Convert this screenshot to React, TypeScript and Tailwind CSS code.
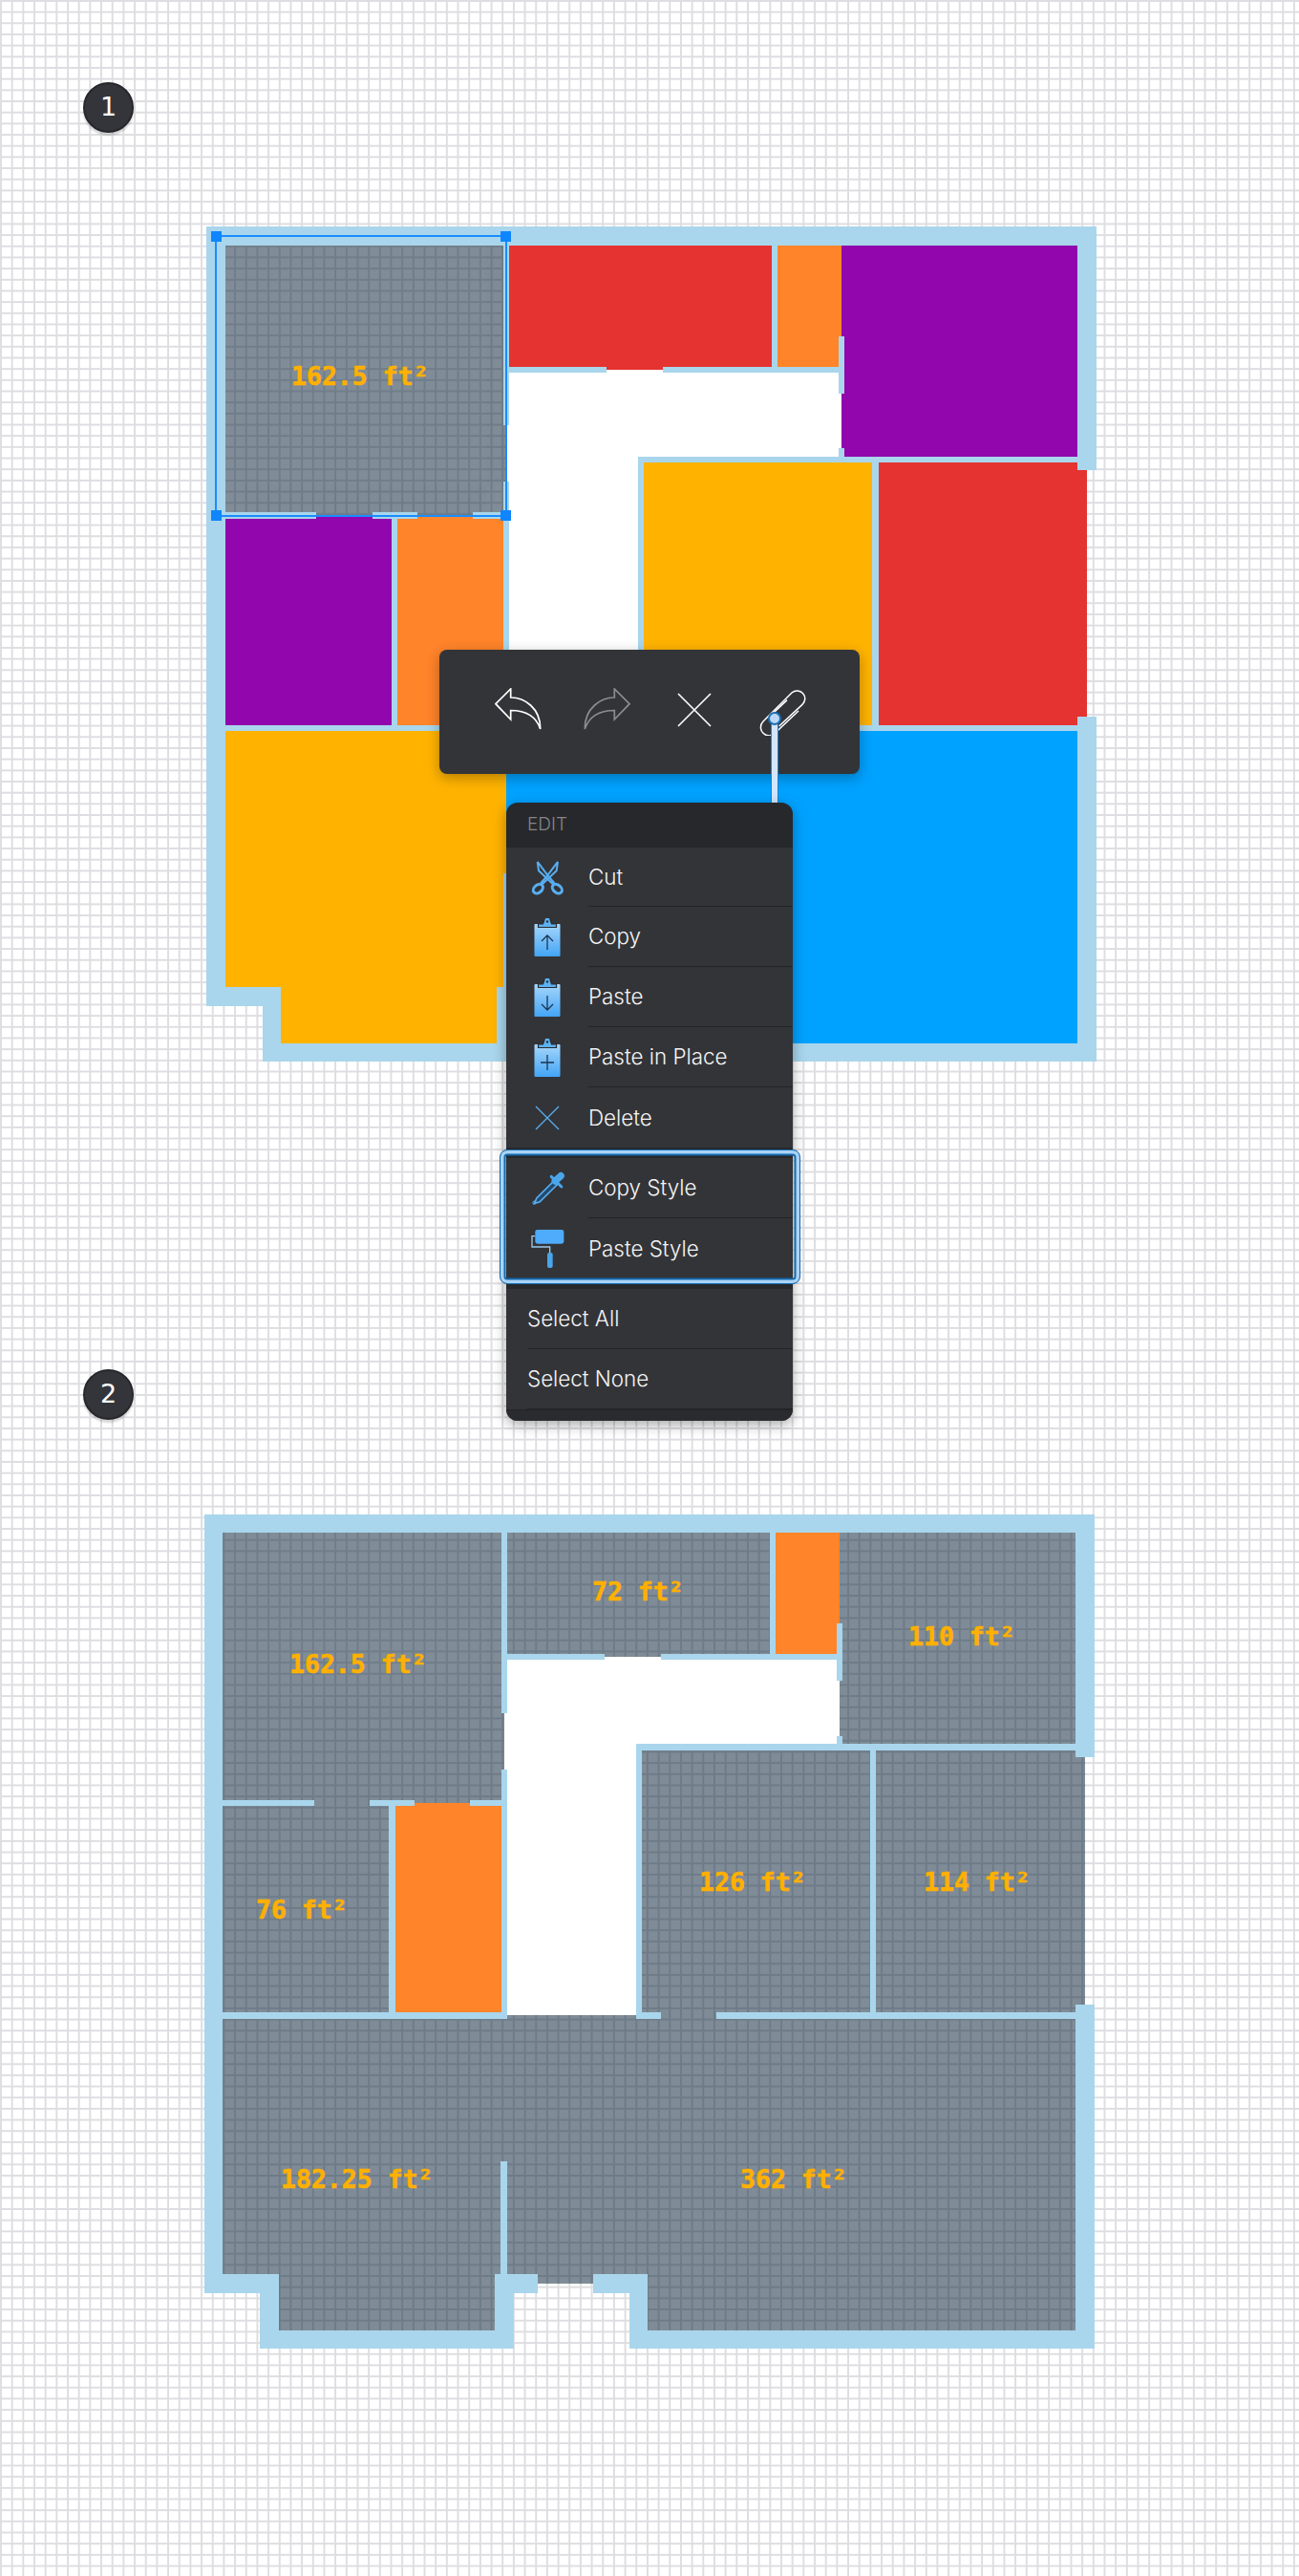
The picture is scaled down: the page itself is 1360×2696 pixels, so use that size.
import { useId } from 'react';
import type { ReactNode } from 'react';

type Box = [number, number, number, number];

const WALL = '#a9d6ec';
const GREY = '#011b31';
const ORANGE = '#ff842a';
const RED = '#e43330';
const PURPLE = '#9106ad';
const YELLOW = '#ffb300';
const BLUE = '#00a2ff';

// all rectangles are in the coordinates of the second plan
const rooms: Record<string, Box[]> = {
  a: [[233.4, 1604, 524.7, 1883.7], [524, 1792.7, 527.7, 1851.7], [328.7, 1883, 387.3, 1886.7], [434.3, 1883, 492.3, 1886.7]],
  b: [[530.7, 1604, 805.6, 1731.3], [633, 1731, 691.7, 1734]],
  c: [[811.8, 1604, 878.6, 1731.3]],
  d: [[878.6, 1604, 1126.2, 1825]],
  e: [[671.7, 1831.7, 911, 2106], [691.7, 2105, 750.2, 2109.3]],
  f: [[917.2, 1831.7, 1136.2, 2106]],
  g: [[233.4, 1890, 407.3, 2106], [328.7, 1886.7, 387.3, 1891]],
  h: [[414, 1890, 524.7, 2106], [434.3, 1886.7, 492.3, 1891]],
  i: [[233.4, 2112, 527.7, 2380], [291.6, 2379, 517.5, 2439]],
  j: [[527.7, 2112, 1126.2, 2381], [530.6, 2109.3, 665.5, 2113], [691.7, 2109.3, 750.2, 2113], [562.6, 2380, 620.8, 2390.3], [678, 2380, 1126.2, 2439]],
};

const corridor: Box[] = [
  [530.7, 1737.3, 878.6, 1825],
  [530.7, 1825, 665.5, 2109.3],
  [633, 1734, 691.7, 1738],
  [527.7, 1792.7, 531, 1851.7],
];

const walls: Box[] = [
  [214, 1584.7, 1145.5, 1604],
  [214, 1584.7, 233.4, 2400],
  [214, 2380, 291.6, 2400],
  [272.3, 2380, 291.6, 2458],
  [272.3, 2439, 537.5, 2458],
  [517.5, 2380, 537.5, 2458],
  [517.5, 2380, 562.6, 2400],
  [620.8, 2380, 678, 2400],
  [659, 2380, 678, 2458],
  [659, 2439, 1145.5, 2458],
  [1126.2, 2097.7, 1145.5, 2458],
  [1126.2, 1584.7, 1145.5, 1839.3],
  [524.7, 1604, 530.7, 1792.7],
  [524.7, 1851.7, 530.7, 2112.7],
  [524.7, 1731.3, 633, 1737.3],
  [691.7, 1731.3, 878.6, 1737.3],
  [805.6, 1604, 811.8, 1731.3],
  [875.5, 1699.3, 882, 1759],
  [875.5, 1816.7, 882, 1825],
  [665.5, 1825, 1126.2, 1831.7],
  [665.5, 1825, 671.7, 2112.7],
  [665.5, 2106, 691.7, 2112.7],
  [750.2, 2106, 1126.2, 2112.7],
  [911, 1831.7, 917.2, 2106],
  [233.4, 1883.7, 328.7, 1890],
  [387.3, 1883.7, 434.3, 1890],
  [492.3, 1883.7, 524.7, 1890],
  [407.3, 1890, 414, 2106],
  [233.4, 2106, 530.7, 2112.7],
  [524.4, 2261.7, 530.6, 2380],
];

const Boxes = ({ list, fill }: { list: Box[]; fill?: string }) => (
  <>
    {list.map(([x1, y1, x2, y2], i) => (
      <rect key={i} x={x1} y={y1} width={x2 - x1} height={y2 - y1} fill={fill} />
    ))}
  </>
);

const Plan = ({ colors, shift }: { colors: Record<string, string>; shift: string }) => {
  const greyRooms = Object.keys(rooms).filter((k) => !colors[k]);
  return (
    <svg width="960" height="900" viewBox="200 1570 960 900" className="block" shapeRendering="crispEdges">
      <g transform={shift}>
        <g opacity="0.5" fill={GREY}>
          {greyRooms.map((k) => (
            <Boxes key={k} list={rooms[k]} />
          ))}
        </g>
        {Object.keys(colors).map((k) => (
          <Boxes key={k} list={rooms[k]} fill={colors[k]} />
        ))}
        <Boxes list={corridor} fill="#ffffff" />
        <Boxes list={walls} fill={WALL} />
      </g>
    </svg>
  );
};

const Label = ({ className, children }: { className: string; children: ReactNode }) => (
  <span className={`absolute -translate-y-1/2 font-['DejaVu_Sans_Mono',monospace] text-[26.5px] leading-none font-bold whitespace-nowrap text-[#ffb000] [-webkit-text-stroke:0.6px_#ffb000] ${className}`}>
    {children}
  </span>
);

const Marker = ({ n }: { n: number }) => (
  <div className="absolute top-[86px] left-[87px] flex h-[53px] w-[53px] items-center justify-center rounded-full border-2 border-[#26272b] bg-[#34353a] font-['DejaVu_Sans',sans-serif] text-[27px] text-white shadow-[0_3px_2px_rgba(0,0,0,0.16)]">
    {n}
  </div>
);

const Handle = ({ className }: { className: string }) => (
  <div className={`absolute h-[11px] w-[11px] bg-[#0f86ff] ${className}`} />
);

const UndoIcon = ({ flip, color }: { flip?: boolean; color: string }) => (
  <svg width="50" height="46" viewBox="-1 -1 50 46" fill="none" stroke={color} strokeWidth="1.7" strokeLinejoin="miter" className={flip ? '-scale-x-100' : ''}>
    <path d="M0 15.7 15.7 0v9C30 9 47 20 46.7 42 42 28 30 22.5 15.7 22.5V32Z" />
  </svg>
);

const CloseIcon = () => (
  <svg width="36" height="36" viewBox="0 0 36 36" stroke="#ffffff" strokeWidth="1.6">
    <path d="M1 1 35 35M35 1 1 35" />
  </svg>
);

const ClipIcon = () => (
  <svg width="50" height="50" viewBox="1060 180 150 150" fill="none" stroke="#ffffff" strokeWidth="4.5" className="mt-[5px]">
    <path d="M1186 252 1112 322A24 24 0 0 1 1075 285L1165 195A24 24 0 0 1 1198 232L1125 300" />
    <path d="M1150 218 1100 265" />
  </svg>
);

const ScissorsIcon = () => (
  <svg width="36" height="37" viewBox="165 203 108 110" fill="none" stroke="#58aef0">
    <path strokeWidth="6" d="M188 208 192 236 238 280M188 208 226 258 242 276M252 208 248 236 202 280M252 208 214 258 198 276" />
    <ellipse cx="190" cy="293" rx="17" ry="12" strokeWidth="9" transform="rotate(-40 190 293)" />
    <ellipse cx="250" cy="293" rx="17" ry="12" strokeWidth="9" transform="rotate(40 250 293)" />
  </svg>
);

const ClipboardIcon = ({ mark }: { mark: string }) => {
  const id = useId();
  return (
    <svg width="28" height="40" viewBox="0 0 28 40">
      <defs>
        <linearGradient id={id} x1="0" y1="0" x2="0" y2="1">
          <stop offset="0" stopColor="#a6d6fb" />
          <stop offset="1" stopColor="#43a5f6" />
        </linearGradient>
      </defs>
      <rect x="0.5" y="6" width="27" height="34" rx="1" fill={`url(#${id})`} />
      <path d="M4.5 9.5V6h5l1.5-4.5a3 3 0 0 1 6 0L18.500 6h5v3.500Z" fill="#5cb2f2" stroke="#2a2b30" strokeWidth="1.2" />
      <circle cx="14" cy="3.500" r="1.200" fill="#2a2b30" />
      <path d={mark} fill="none" stroke="#1c3550" strokeWidth="1.300" />
    </svg>
  );
};

const DeleteIcon = () => (
  <svg width="26" height="26" viewBox="0 0 26 26" stroke="#58aef0" strokeWidth="1.300">
    <path d="M1 1 25 25M25 1 1 25" />
  </svg>
);

const DropperIcon = () => (
  <svg width="37" height="36" viewBox="162 250 110 108" fill="none">
    <path d="M236 280 182 334 175 350 191 346 246 292Z" fill="#214a70" stroke="#58aef0" strokeWidth="5" />
    <path d="M228 266 260 298" stroke="#4aa6ea" strokeWidth="9" strokeLinecap="round" />
    <path d="M240 280 258 264" stroke="#4aa6ea" strokeWidth="22" strokeLinecap="round" />
    <circle cx="175" cy="348" r="5" stroke="#58aef0" strokeWidth="3" />
  </svg>
);

const RollerIcon = () => (
  <svg width="36" height="42" viewBox="162 430 108 126" fill="none">
    <rect x="178" y="433" width="90" height="44" rx="7" fill="#4fabfb" />
    <path d="M178 453H168V487H224V510" stroke="#9cc8ea" strokeWidth="4" />
    <rect x="216" y="505" width="17" height="48" rx="6" fill="#4aa6ea" />
  </svg>
);

const MenuRow = ({ icon, label, last, heightClass }: { icon: ReactNode; label: string; last?: boolean; heightClass: string }) => (
  <div className={`flex items-stretch bg-[#333438] pl-[21px] ${heightClass}`}>
    <div className="flex w-[44px] items-center justify-center">{icon}</div>
    <div className={`ml-[21px] flex flex-1 items-center text-[22.4px] font-light text-[#f4f4f5] ${last ? '' : 'border-b border-[#232427]'}`}>{label}</div>
  </div>
);

const PlainRow = ({ label, last }: { label: string; last?: boolean }) => (
  <div className="h-[63px] bg-[#333438] pl-[22px]">
    <div className={`flex h-full items-center text-[22.4px] font-light text-[#f4f4f5] ${last ? '' : 'border-b border-[#232427]'}`}>{label}</div>
  </div>
);

const Band = () => <div className="h-[11px] bg-[#27282b]" />;

const Menu = () => (
  <div className="absolute top-[840px] left-[530px] w-[300px] rounded-xl bg-[#27282b] font-[Inter,sans-serif] shadow-[0_4px_14px_rgba(0,0,0,0.35)]">
    <div className="flex h-[47px] items-center pl-[22px] text-[19px] font-light text-[#85858a]">EDIT</div>
    <MenuRow heightClass="h-[62px]" icon={<ScissorsIcon />} label="Cut" />
    <MenuRow heightClass="h-[63px]" icon={<ClipboardIcon mark="M14 33V18M8 24 14 18l6 6" />} label="Copy" />
    <MenuRow heightClass="h-[63px]" icon={<ClipboardIcon mark="M14 18V33M8 27 14 33l6-6" />} label="Paste" />
    <MenuRow heightClass="h-[63px]" icon={<ClipboardIcon mark="M14 17V33M7 25H21" />} label="Paste in Place" />
    <MenuRow heightClass="h-[63px]" icon={<DeleteIcon />} label="Delete" last />
    <Band />
    <MenuRow heightClass="h-[63px]" icon={<DropperIcon />} label="Copy Style" />
    <MenuRow heightClass="h-[63px]" icon={<RollerIcon />} label="Paste Style" last />
    <Band />
    <PlainRow label="Select All" />
    <PlainRow label="Select None" />
    <div className="h-[12px] rounded-b-xl border-t border-[#232427] bg-[#2a2b2e]" />
    <div className="absolute top-[363px] -left-[7px] h-[141px] w-[315px] rounded-lg border-[1.5px] border-[#1369ad] shadow-[inset_0_0_0_3.5px_#a9d3f7,inset_0_0_0_5.5px_#1369ad]" />
  </div>
);

const App = () => (
  <div className="relative h-[2696px] w-[1360px] overflow-hidden bg-white bg-[linear-gradient(to_right,#dedee2_2px,transparent_2px),linear-gradient(to_bottom,#dedee2_2px,transparent_2px)] bg-[size:11.68px_11.68px]">
    <section className="relative z-10 h-[1347px] pt-[223px] pl-[200px]">
      <Plan
        shift="translate(2.3 -0.3)"
        colors={{ b: RED, c: ORANGE, d: PURPLE, e: YELLOW, f: RED, g: PURPLE, h: ORANGE, i: YELLOW, j: BLUE }}
      />
      <Marker n={1} />
      <Label className="top-[394px] left-[305px]">162.5 ft²</Label>

      <div className="absolute top-[246px] left-[225px] h-[295px] w-[306px] border-2 border-[#1a8cff]">
        <Handle className="-top-[6px] -left-[6px]" />
        <Handle className="-top-[6px] -right-[6px]" />
        <Handle className="-bottom-[6px] -left-[6px]" />
        <Handle className="-right-[6px] -bottom-[6px]" />
      </div>

      <div className="absolute top-[680px] left-[460px] flex h-[130px] w-[440px] items-center rounded-lg bg-[#333438] pb-[5px] pl-[37px] shadow-[0_4px_14px_rgba(0,0,0,0.3)]">
        <div className="flex w-[92px] justify-center"><UndoIcon color="#ffffff" /></div>
        <div className="flex w-[92px] justify-center"><UndoIcon flip color="#8b8c8e" /></div>
        <div className="flex w-[92px] justify-center"><CloseIcon /></div>
        <div className="flex w-[92px] justify-center"><ClipIcon /></div>
      </div>
      <div className="absolute top-[752px] left-[807px] h-[90px] w-[8px] border-x-[1.5px] border-[#2a7cc4] bg-[#d3e6fb]" />
      <div className="absolute top-[745px] left-[804px] h-[14px] w-[14px] rounded-full border-2 border-[#1b6fb5] bg-[#bcd8f6]" />
      <Menu />
    </section>

    <section className="relative h-[1349px] pt-[223px] pl-[200px]">
      <Plan shift="translate(0 0)" colors={{ c: ORANGE, h: ORANGE }} />
      <Marker n={2} />
      <Label className="top-[395px] left-[303px]">162.5 ft²</Label>
      <Label className="top-[319px] left-[620px]">72 ft²</Label>
      <Label className="top-[366px] left-[951px]">110 ft²</Label>
      <Label className="top-[623px] left-[732px]">126 ft²</Label>
      <Label className="top-[623px] left-[967px]">114 ft²</Label>
      <Label className="top-[652px] left-[268px]">76 ft²</Label>
      <Label className="top-[934px] left-[294px]">182.25 ft²</Label>
      <Label className="top-[934px] left-[775px]">362 ft²</Label>
    </section>
  </div>
);

export default App;
